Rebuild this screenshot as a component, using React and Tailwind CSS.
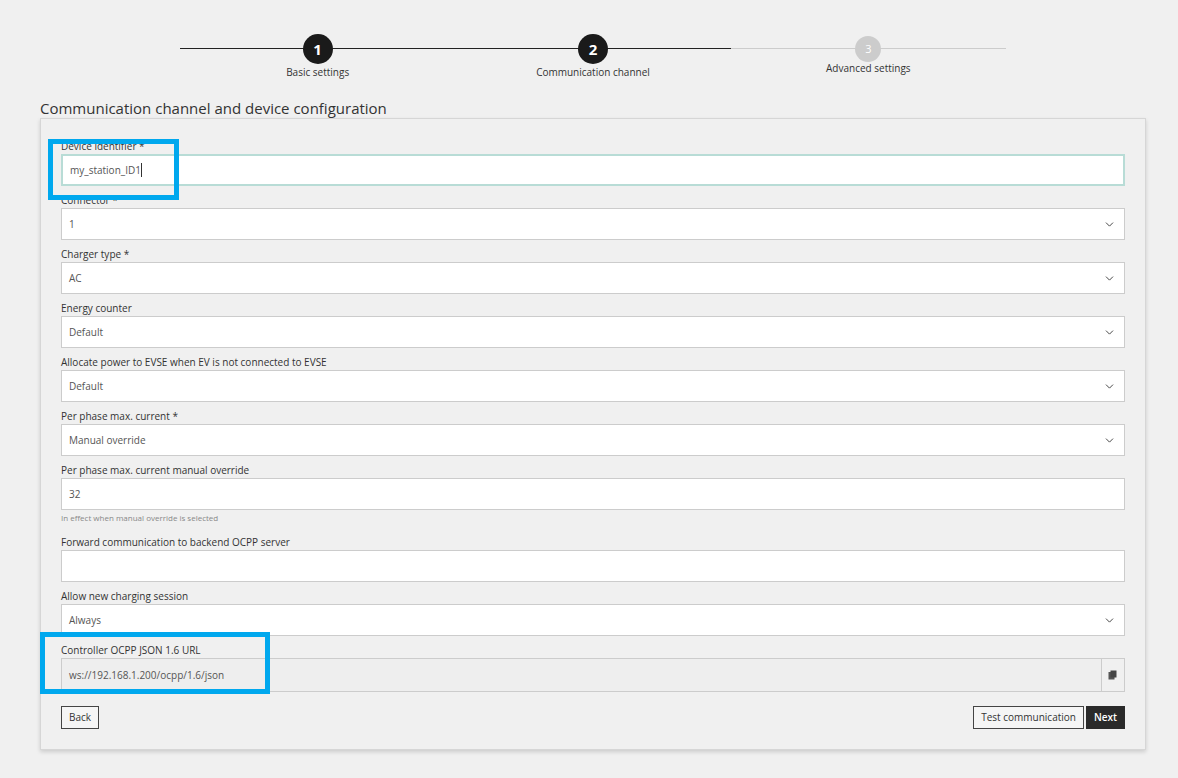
import React from "react";
import { ChevronDown } from "lucide-react";

const steps = [
  { n: 1, label: "Basic settings", done: true },
  { n: 2, label: "Communication channel", done: true },
  { n: 3, label: "Advanced settings", done: false },
];

function Select({ label, value }) {
  return (
    <div className="mb-[6px]">
      <div className="text-[10px] text-[#333] h-[16px] leading-[16px]">{label}</div>
      <div className="h-[32px] bg-white border border-[#ccc] flex items-center justify-between pl-[7px] pr-[8px]">
        <span className="text-[10px] text-[#555]">{value}</span>
        <ChevronDown size={13} strokeWidth={1.8} className="text-[#444]" />
      </div>
    </div>
  );
}

function Input({ label, value, hint, active }) {
  return (
    <div className="mb-[6px]">
      <div className="text-[10px] text-[#333] h-[16px] leading-[16px]">{label}</div>
      <div className={`h-[32px] bg-white border flex items-center pl-[7px] ${active ? "border-[#b8dcd6] border-2" : "border-[#ccc]"}`}>
        <span className="text-[10px] text-[#555]">{value}</span>
        {active && <span className="w-px h-[14px] bg-[#333]" />}
      </div>
      {hint && <div className="text-[8px] text-[#888] mt-[2px] -mb-[8px]">{hint}</div>}
    </div>
  );
}

export default function App() {
  return (
    <div className="min-h-[778px] bg-[#f0f0f0] relative" style={{ fontFamily: "'Open Sans', sans-serif" }}>
      <div className="pt-[34px] mx-[180px] w-[826px] flex">
        {steps.map((s, i) => (
          <div key={s.n} className="flex-1 relative flex flex-col items-center">
            <div className={`absolute top-[14px] left-0 right-0 h-px ${s.done ? "bg-[#222]" : "bg-[#ccc]"}`} />
            {s.done ? (
              <div className="relative w-[30px] h-[30px] rounded-full bg-[#1a1a1a] text-white text-[15px] font-bold flex items-center justify-center">{s.n}</div>
            ) : (
              <div className="relative mt-[2px] w-[26px] h-[26px] rounded-full bg-[#ccc] text-white text-[11px] flex items-center justify-center">{s.n}</div>
            )}
            <div className={`text-[10px] text-[#333] ${s.done ? "mt-[1px]" : "-mt-[1px]"}`}>{s.label}</div>
          </div>
        ))}
      </div>
      <div className="mx-[40px] mt-[18px] text-[15px] text-[#333] leading-[20px]">Communication channel and device configuration</div>
      <div className="mx-[40px] w-[1106px] border border-[#d6d6d6] shadow-[0_2px_4px_rgba(0,0,0,0.15)] bg-[#f0f0f0] px-[20px] pt-[19px] pb-[20px]">
        <Input label="Device identifier *" value="my_station_ID1" active />
        <Select label="Connector *" value="1" />
        <Select label="Charger type *" value="AC" />
        <Select label="Energy counter" value="Default" />
        <Select label="Allocate power to EVSE when EV is not connected to EVSE" value="Default" />
        <Select label="Per phase max. current *" value="Manual override" />
        <Input label="Per phase max. current manual override" value="32" hint="In effect when manual override is selected" />
        <div className="h-[12px]" />
        <Input label="Forward communication to backend OCPP server" value="" />
        <Select label="Allow new charging session" value="Always" />
        <div>
          <div className="text-[10px] text-[#333] h-[16px] leading-[16px]">Controller OCPP JSON 1.6 URL</div>
          <div className="flex h-[34px] border border-[#ccc]">
            <div className="flex-1 flex items-center pl-[7px] text-[10px] text-[#555] bg-[#eee]">ws://192.168.1.200/ocpp/1.6/json</div>
            <div className="w-[23px] border-l border-[#ccc] flex items-center justify-center">
              <svg width="10" height="10" viewBox="0 0 10 10"><rect x="0.5" y="2" width="6" height="7.5" fill="#555" /><rect x="2.5" y="0.5" width="6" height="7" fill="#444" /></svg>
            </div>
          </div>
        </div>
        <div className="flex justify-between mt-[14px]">
          <button className="h-[23px] px-[7px] border border-[#444] bg-[#f5f5f5] text-[10px] text-[#333]">Back</button>
          <div className="flex gap-[2px]">
            <button className="h-[23px] px-[7px] border border-[#444] bg-[#f5f5f5] text-[10px] text-[#333]">Test communication</button>
            <button className="h-[23px] px-[8px] bg-[#2a2a2a] text-white text-[10px] font-semibold">Next</button>
          </div>
        </div>
      </div>
      <div className="absolute left-[48px] top-[139px] w-[131px] h-[61px] border-[5px] border-[#00a8ee]" />
      <div className="absolute left-[40px] top-[632px] w-[230px] h-[62px] border-[5px] border-[#00a8ee]" />
    </div>
  );
}
